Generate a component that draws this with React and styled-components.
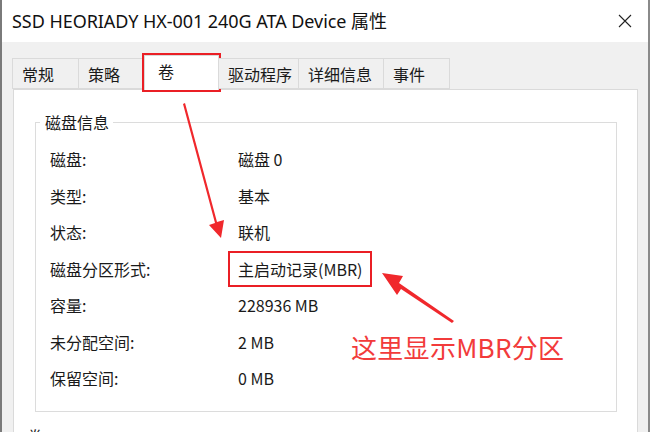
import React from "react";
import styled, { createGlobalStyle } from "styled-components";

const GlobalStyle = createGlobalStyle`
  html, body {
    margin: 0;
    padding: 0;
    background: #f0f0f0;
  }
  body {
    font-family: "Noto Sans CJK SC", "Noto Sans", sans-serif;
    color: #1a1a1a;
  }
`;

const Window = styled.div`
  position: relative;
  width: 650px;
  height: 432px;
  box-sizing: border-box;
  border-left: 2px solid #7a7a7a;
  border-right: 2px solid #8a8a8a;
  background: #f0f0f0;
  overflow: hidden;
  display: flex;
  flex-direction: column;
`;

const TitleBar = styled.div`
  height: 42px;
  flex: none;
  background: #ffffff;
  display: flex;
  align-items: center;
  justify-content: space-between;
  padding: 0 16px 0 10px;

  h1 {
    margin: 0;
    font: normal 400 18px/1 "Noto Sans", "Noto Sans CJK SC", sans-serif;
    color: #111;
    letter-spacing: -0.05px;
  }
`;

const Body = styled.div`
  flex: 1;
  display: flex;
  flex-direction: column;
  padding: 16px 10px 0 11px;
`;

const TabRow = styled.div`
  display: flex;
  align-items: flex-end;
  height: 31px;
  position: relative;
  z-index: 1;
`;

const Tab = styled.div`
  box-sizing: border-box;
  width: ${p => p.w}px;
  height: ${p => (p.active ? 35 : 31)}px;
  margin-bottom: ${p => (p.active ? -1 : 0)}px;
  padding: ${p => (p.active ? "0 0 4px 13px" : "0 0 0 9px")};
  display: flex;
  align-items: center;
  font-size: 16px;
  color: #1a1a1a;
  background: ${p => (p.active ? "#ffffff" : "#f0f0f0")};
  border: 1px solid #dadada;
  border-bottom: ${p => (p.active ? "none" : "1px solid #dadada")};
  margin-left: -1px;
  outline: ${p => (p.active ? "2px solid #ea1f25" : "none")};
`;

const Panel = styled.div`
  flex: 1;
  background: #ffffff;
  border: 1px solid #dadada;
  padding: 20px 20px 0 21px;
`;

const GroupBox = styled.fieldset`
  margin: 0;
  border: 1px solid #dcdcdc;
  padding: 7px 0 14px 14px;

  legend {
    font-size: 16px;
    color: #1a1a1a;
    padding: 0 4px 0 5px;
    margin-left: -10px;
  }
`;

const InfoRow = styled.div`
  display: grid;
  grid-template-columns: 188px auto;
  justify-items: start;
  align-items: center;
  height: 36.5px;
  font-size: 16px;
`;

const Value = styled.span`
  box-sizing: border-box;
  padding: ${p => (p.highlight ? "4px 8px 4px 8px" : "0")};
  margin-left: ${p => (p.highlight ? "-10px" : "0")};
  border: ${p => (p.highlight ? "2px solid #ea1f25" : "none")};
`;

const NextLabel = styled.div`
  font-size: 16px;
  padding: 12px 0 0 0;
  margin-left: -8px;
`;

const Note = styled.div`
  position: absolute;
  left: 349px;
  top: 328px;
  font-size: 26px;
  color: #f23b3b;
  letter-spacing: 0.3px;
`;

const Overlay = styled.svg`
  position: absolute;
  left: 0;
  top: 0;
  pointer-events: none;
`;

const tabs = [
  { name: "常规", w: 67 },
  { name: "策略", w: 67 },
  { name: "卷", w: 75, active: true },
  { name: "驱动程序", w: 81 },
  { name: "详细信息", w: 86 },
  { name: "事件", w: 67 },
];

const rows = [
  ["磁盘:", "磁盘 0"],
  ["类型:", "基本"],
  ["状态:", "联机"],
  ["磁盘分区形式:", "主启动记录(MBR)", true],
  ["容量:", "228936 MB"],
  ["未分配空间:", "2 MB"],
  ["保留空间:", "0 MB"],
];

export default function App() {
  return (
    <>
      <GlobalStyle />
      <Window>
        <TitleBar>
          <h1>SSD HEORIADY HX-001 240G ATA Device 属性</h1>
          <svg width="14" height="14" viewBox="0 0 14 14">
            <path d="M1 1 L13 13 M13 1 L1 13" stroke="#222" strokeWidth="1.1" />
          </svg>
        </TitleBar>
        <Body>
          <TabRow>
            {tabs.map(t => (
              <Tab key={t.name} w={t.w} active={t.active}>
                {t.name}
              </Tab>
            ))}
          </TabRow>
          <Panel>
            <GroupBox>
              <legend>磁盘信息</legend>
              {rows.map(([label, value, hl]) => (
                <InfoRow key={label}>
                  <span>{label}</span>
                  <Value highlight={hl}>{value}</Value>
                </InfoRow>
              ))}
            </GroupBox>
            <NextLabel>卷</NextLabel>
          </Panel>
        </Body>
        <Note>这里显示MBR分区</Note>
        <Overlay width="650" height="432" viewBox="0 0 650 432">
          <polygon
            fill="#f0282c"
            points="181,104 183,103 215,222 222,220 219,238 207,225 213,223"
          />
          <polygon
            fill="#f0282c"
            points="452,321 450,323 399,289 395,295 380,273 401,276 397,283"
          />
        </Overlay>
      </Window>
    </>
  );
}
